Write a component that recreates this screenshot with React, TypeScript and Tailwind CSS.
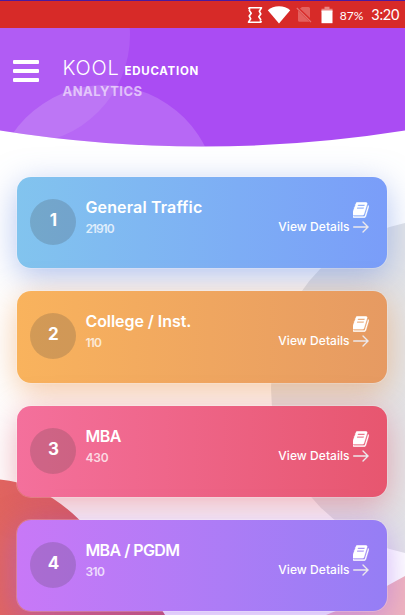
import React from 'react'

interface Category {
  name: string
  count: number
  card: string
  nameSpacing: string
  countSpacing: string
}

const categories: Category[] = [
  {
    name: 'General Traffic',
    count: 21910,
    card: 'bg-linear-to-r from-[#82c4ee] to-[#7a9df9] shadow-[0_8px_32px_rgba(100,135,225,0.5)]',
    nameSpacing: 'tracking-[0.15px]',
    countSpacing: 'tracking-[-1px]',
  },
  {
    name: 'College / Inst.',
    count: 110,
    card: 'bg-linear-to-r from-[#f9b35d] to-[#e69a62] shadow-[0_8px_32px_rgba(235,145,70,0.5)]',
    nameSpacing: 'tracking-[-0.05px]',
    countSpacing: 'tracking-[-0.8px]',
  },
  {
    name: 'MBA',
    count: 430,
    card: 'bg-linear-to-r from-[#f4709c] to-[#e7566f] shadow-[0_8px_32px_rgba(220,95,115,0.5)]',
    nameSpacing: 'tracking-[-0.5px]',
    countSpacing: 'tracking-[-0.1px]',
  },
  {
    name: 'MBA / PGDM',
    count: 310,
    card: 'bg-linear-to-r from-[#c878f7] to-[#957ef5] shadow-[0_8px_32px_rgba(160,95,240,0.5)]',
    nameSpacing: 'tracking-[-0.55px]',
    countSpacing: 'tracking-[-0.6px]',
  },
]

function StatusBar() {
  return (
    <div className="flex h-7 items-center justify-end border-t border-[#4a1a9e] bg-[#d72a28] pr-1.5 text-white">
      {/* Vibrate / rotate */}
      <svg width="16" height="18" viewBox="0 0 16 18" fill="none" stroke="white" strokeWidth="1.6" strokeLinejoin="round">
        <path d="M1.500 1.800H14.500L12.300 5.200 13.800 8 11.800 10.800 14 14M1.500 1.800 3 3.800M14.500 16.200H1.500L3.700 12.800 2.200 10 4.200 7.200 2 4M14.500 16.200 13 14.200" />
      </svg>
      <svg className="ml-1" width="24" height="18" viewBox="0 0 24 18" fill="white">
        <path d="M12 17.500.8 4.200C3.800 1.700 7.600.3 12 .3s8.200 1.400 11.200 3.900z" />
      </svg>
      {/* No SIM */}
      <svg className="ml-[5px]" width="16" height="17" viewBox="0 0 16 17">
        <path d="M6 1h6.500a1.500 1.500 0 0 1 1.500 1.500V12L4 2.500zM2 4.500 13.500 15.800H3.500A1.500 1.500 0 0 1 2 14.300z" fill="#e4605e" />
        <path d="M.8 2 15 16" stroke="#e4706e" strokeWidth="1.200" />
      </svg>
      <svg className="ml-[9px]" width="12" height="18" viewBox="0 0 12 18">
        <path d="M3.500.8h5v2h3V6H.5V2.800h3z" fill="#ea8583" />
        <path d="M.5 4.500h11v12.700H.5z" fill="white" />
      </svg>
      <span className="mt-0.5 ml-[7px] font-['Lato'] text-[12px] leading-none">87%</span>
      <span className="mt-0.5 ml-2 font-['Lato'] text-[14.5px] leading-none tracking-[-0.3px]">3:20</span>
    </div>
  )
}

function Header() {
  return (
    <header className="relative h-[120px]">
      <svg className="absolute inset-0" width="405" height="120" viewBox="0 28 405 120">
        <defs>
          <clipPath id="curve">
            <path d="M0 28H405V130.500A1290 1290 0 0 1 0 130.500Z" />
          </clipPath>
        </defs>
        <g clipPath="url(#curve)">
          <rect y="28" width="405" height="120" fill="#aa4cf3" />
          <circle cx="21" cy="35" r="109" fill="white" fillOpacity="0.09" />
          <circle cx="105" cy="197" r="112" fill="white" fillOpacity="0.16" />
        </g>
      </svg>
      <div className="relative flex pt-8 pl-[13px] text-white">
        <button className="flex h-[22px] w-[26px] flex-col justify-between" aria-label="Menu">
          <span className="h-1 w-full rounded-[1px] bg-white" />
          <span className="h-1 w-full rounded-[1px] bg-white" />
          <span className="h-1 w-full rounded-[1px] bg-white" />
        </button>
        <div className="ml-[23.5px] -mt-0.5 font-['Inter',sans-serif]">
          <div className="flex items-baseline leading-5">
            <span className="text-[20px] font-light tracking-[0.8px]">KOOL</span>
            <span className="ml-[5px] text-[11.5px] font-bold tracking-[0.7px]">EDUCATION</span>
          </div>
          <div className="text-[13px] leading-5 font-bold tracking-[0.5px] text-white/60">ANALYTICS</div>
        </div>
      </div>
    </header>
  )
}

function Backdrop() {
  return (
    <svg className="absolute inset-0" width="405" height="615" viewBox="0 0 405 615">
      <defs>
        <linearGradient id="coral" x1="0" y1="0" x2="1" y2="0">
          <stop offset="0" stopColor="#e1655f" />
          <stop offset="1" stopColor="#c94a55" />
        </linearGradient>
      </defs>
      <circle cx="439.5" cy="388" r="168.500" fill="#e3e4e7" />
      <path d="M0 479.500C30 482 57 498 79 519.500C115 555 145 580 165 615H0Z" fill="url(#coral)" />
      <path d="M326 615C350 606 380 590 405 576V615Z" fill="#f0b5bd" />
    </svg>
  )
}

function BookIcon() {
  return (
    <svg width="16" height="16" viewBox="110 110 1570 1570" fill="white" stroke="white" strokeWidth="30">
      <path d="M1639 478q40 57 18 129l-275 906q-19 64-76.500 107.500t-122.500 43.500h-923q-77 0-148.500-53.500t-99.500-131.500q-24-67-2-127 0-4 3-27t4-37q1-8-3-21.500t-3-19.500q2-11 8-21t16.500-23.500 16.500-23.500q23-38 45-91.500t30-91.500q3-10 .5-30t-.5-28q3-11 17-28t17-23q21-36 42-92t25-90q1-9-2.500-32t.5-28q4-13 22-30.500t22-22.500q19-26 42.500-84.500t27.500-96.500q1-8-3-25.500t-2-26.500q2-8 9-18t18-23 17-21q8-12 16.500-30.500t15-35 16-36 19.500-32 26.500-23.500 36-11.500 47.500 5.500l-1 3q38-9 51-9h761q74 0 114 56t18 130l-274 906q-36 119-71.500 153.500t-128.500 34.500h-869q-27 0-38 15-11 16-1 43 24 70 144 70h923q29 0 56-15.500t35-41.500l300-987q7-22 5-57 38 15 59 43zm-1064 2q-4 13 2 22.500t20 9.500h608q13 0 25.500-9.500t16.500-22.500l21-64q4-13-2-22.500t-20-9.500h-608q-13 0-25.500 9.500t-16.500 22.500zm-83 256q-4 13 2 22.500t20 9.500h608q13 0 25.500-9.500t16.500-22.500l21-64q4-13-2-22.500t-20-9.500h-608q-13 0-25.500 9.500t-16.500 22.500z" />
    </svg>
  )
}

function CategoryCard({ item, position }: { item: Category; position: number }) {
  return (
    <div className={`flex h-[91.25px] rounded-[14px] px-[13.4px] pt-[22px] text-white ring-1 ring-white/20 ${item.card}`}>
      <div className="flex h-[46px] w-[46px] shrink-0 justify-center rounded-full bg-[#3c3c3c]/20 pt-[11px] text-[17px] leading-5 font-bold">
        {position}
      </div>
      <div className="ml-[9px] -mt-[2px]">
        <div className={`text-[16px] leading-5 font-semibold ${item.nameSpacing}`}>{item.name}</div>
        <div className={`mt-[3px] text-[12px] leading-[18px] font-semibold text-white/75 ${item.countSpacing}`}>
          {item.count}
        </div>
      </div>
      <div className="ml-auto flex flex-col items-end pt-[3px] pr-[5px]">
        <BookIcon />
        <a className="flex items-center text-[12px] leading-[18px] font-medium tracking-[0.05px]">
          View Details
          <svg className="ml-[3px]" width="16" height="12" viewBox="0 0 16 12" fill="none" stroke="#ece8ec" strokeWidth="1.400" strokeLinecap="round">
            <path d="M.7 6h14M10 1l5 5-5 5" />
          </svg>
        </a>
      </div>
    </div>
  )
}

export default function App() {
  return (
    <div className="relative h-[615px] w-[405px] overflow-hidden bg-white font-['Inter',sans-serif]">
      <Backdrop />
      <div className="relative">
        <StatusBar />
        <Header />
        <main className="flex flex-col gap-[23px] pt-[29px] pr-[18px] pl-[17px]">
          {categories.map((item, idx) => (
            <CategoryCard key={item.name} item={item} position={idx + 1} />
          ))}
        </main>
      </div>
    </div>
  )
}
